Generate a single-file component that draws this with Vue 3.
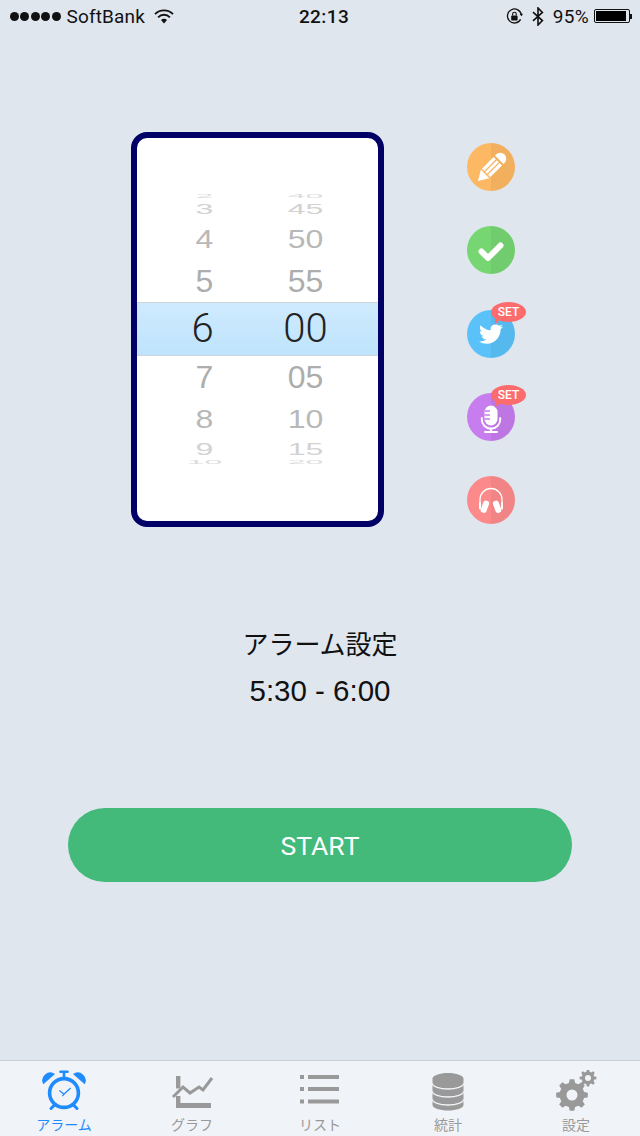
<template>
  <div class="screen">
    <div class="status">
      <div class="status-left">
        <span class="dots"><i v-for="n in 5" :key="n"></i></span>
        <span class="carrier">SoftBank</span>
        <svg class="wifi" width="20" height="15" viewBox="0 0 20 15">
          <path d="M1 5.2a12.6 12.6 0 0 1 18 0" fill="none" stroke="#111" stroke-width="1.9" />
          <path d="M4.1 8.3a8.2 8.2 0 0 1 11.8 0" fill="none" stroke="#111" stroke-width="1.9" />
          <path d="M7 11.1a4.2 4.2 0 0 1 6 0L10 14.4z" fill="#111" />
        </svg>
      </div>
      <div class="clock">22:13</div>
      <div class="status-right">
        <svg width="17" height="17" viewBox="0 0 17 17">
          <path d="M14.6 11.4A7 7 0 1 1 15.4 7" fill="none" stroke="#111" stroke-width="1.3" />
          <path d="M13.6 6.2l2 2 1.4-2.4z" fill="#111" />
          <rect x="5.2" y="7.6" width="6.4" height="5" rx=".8" fill="#111" />
          <path d="M6.6 7.6V6a1.8 1.8 0 0 1 3.6 0v1.6" fill="none" stroke="#111" stroke-width="1.1" />
        </svg>
        <svg class="bt" width="12" height="19" viewBox="0 0 12 19">
          <path d="M1 5.2l9.4 8.4L6 18V1l4.4 4.4L1 13.8" fill="none" stroke="#111" stroke-width="1.6" />
        </svg>
        <span class="percent">95%</span>
        <div class="battery"><div class="battery-fill"></div></div>
        <div class="battery-nub"></div>
      </div>
    </div>

    <div class="stage">
      <div class="card">
        <div class="picker">
          <div
            v-for="row in rows"
            :key="row.hour"
            class="row"
            :class="{ selected: row.selected }"
            :style="{ height: row.height + 'px', color: row.color }"
          >
            <span :style="{ transform: 'scaleY(' + row.scale + ')' }">{{ row.hour }}</span>
            <span :style="{ transform: 'scaleY(' + row.scale + ')' }">{{ row.minute }}</span>
          </div>
        </div>
      </div>

      <div class="side">
        <div v-for="item in sideItems" :key="item.name" class="side-item">
          <svg width="48" height="48" viewBox="0 0 48 48">
            <circle cx="24" cy="24" r="24" :fill="item.color" />
            <path d="M24 0a24 24 0 0 1 0 48z" fill="#000" fill-opacity=".045" />
            <g v-if="item.name === 'pencil'" transform="translate(11 38) rotate(45)" fill="#fff">
              <path d="M0 0L-6-10H6z" />
              <rect x="-6" y="-28" width="3.4" height="16.5" />
              <rect x="-1.4" y="-28" width="2.8" height="16.5" />
              <rect x="2.6" y="-28" width="3.4" height="16.5" />
              <path d="M-6-30v-1.5a6 6 0 0 1 12 0v1.5z" />
            </g>
            <path
              v-else-if="item.name === 'check'"
              d="M14.5 25.5l6.5 6.5L33.5 19.5"
              fill="none"
              stroke="#fff"
              stroke-width="6"
              stroke-linecap="round"
              stroke-linejoin="round"
            />
            <path
              v-else-if="item.name === 'twitter'"
              transform="translate(12 12)"
              fill="#fff"
              d="M23.953 4.57a10 10 0 0 1-2.825.775 4.958 4.958 0 0 0 2.163-2.723c-.951.555-2.005.959-3.127 1.184a4.92 4.92 0 0 0-8.384 4.482C7.69 8.095 4.067 6.13 1.64 3.162a4.822 4.822 0 0 0-.666 2.475c0 1.71.87 3.213 2.188 4.096a4.904 4.904 0 0 1-2.228-.616v.06a4.923 4.923 0 0 0 3.946 4.827 4.996 4.996 0 0 1-2.212.085 4.936 4.936 0 0 0 4.604 3.417 9.867 9.867 0 0 1-6.102 2.105c-.39 0-.779-.023-1.17-.067a13.995 13.995 0 0 0 7.557 2.209c9.053 0 13.998-7.496 13.998-13.985 0-.21 0-.42-.015-.63A9.935 9.935 0 0 0 24 4.59z"
            />
            <g v-else-if="item.name === 'mic'">
              <rect x="17.5" y="12.5" width="13" height="20" rx="6.5" fill="#fff" />
              <path d="M17.5 18h5.5M17.5 22h5.5M17.5 26h5.5" stroke="#c77ded" stroke-width="1.3" />
              <path d="M14.8 25v1.5a9.2 9.2 0 0 0 18.4 0V25" fill="none" stroke="#fff" stroke-width="1.9" stroke-linecap="round" />
              <path d="M24 35.5v3M18 39h12" stroke="#fff" stroke-width="2" stroke-linecap="round" />
            </g>
            <g v-else fill="#fff">
              <path d="M13 30v-6.5a11 11 0 0 1 22 0V30" fill="none" stroke="#fff" stroke-width="1.3" />
              <rect x="14.8" y="24.5" width="6" height="12.5" rx="2.5" transform="rotate(20 17.8 31)" />
              <rect x="27.2" y="24.5" width="6" height="12.5" rx="2.5" transform="rotate(-20 30.2 31)" />
              <rect x="12" y="26" width="2" height="7.5" rx="1" />
              <rect x="34" y="26" width="2" height="7.5" rx="1" />
            </g>
          </svg>
          <div v-if="item.set" class="badge">SET</div>
        </div>
      </div>
    </div>

    <div class="alarm-info">
      <div class="alarm-title">アラーム設定</div>
      <div class="alarm-time">5:30 - 6:00</div>
    </div>

    <button class="start">START</button>

    <nav class="tabs">
      <div class="tab active">
        <svg width="44" height="44" viewBox="0 0 44 44">
          <g fill="none" stroke="#1e8bff">
            <circle cx="22" cy="23" r="14.4" stroke-width="3.6" />
            <path d="M22 8.5V2.5" stroke-width="2.6" />
            <path d="M18.5 1.8h7" stroke-width="2.6" stroke-linecap="round" />
            <path d="M12 35.5l-3 3M32 35.5l3 3" stroke-width="3" stroke-linecap="round" />
            <path d="M22.4 24.4l-5-4M21.6 24.4l7-6.4M20.3 26l1.7-1.6" stroke-width="1.3" />
          </g>
          <path d="M1.3 14.3A8 8 0 0 1 13 4z" fill="#1e8bff" />
          <path d="M42.7 14.3A8 8 0 0 0 31 4z" fill="#1e8bff" />
        </svg>
        <span>アラーム</span>
      </div>
      <div class="tab">
        <svg width="44" height="44" viewBox="0 0 44 44">
          <path d="M6 6h4.4v12.5H6zM6 26h4.4v7H41v5H6z" fill="#999" />
          <path d="M3 27L13 17l7 6 9-6 4 3L42 8" fill="none" stroke="#999" stroke-width="3" />
        </svg>
        <span>グラフ</span>
      </div>
      <div class="tab">
        <svg width="44" height="44" viewBox="0 0 44 44">
          <g fill="#999">
            <rect x="2" y="5" width="4" height="4" />
            <rect x="10" y="5" width="31" height="4" />
            <rect x="2" y="17" width="4" height="4" />
            <rect x="10" y="17" width="31" height="4" />
            <rect x="2" y="29.5" width="4" height="4" />
            <rect x="10" y="29.5" width="31" height="4" />
          </g>
        </svg>
        <span>リスト</span>
      </div>
      <div class="tab">
        <svg width="44" height="44" viewBox="0 0 44 44">
          <path d="M6.5 8.5c0-3 7-5.5 15.5-5.5s15.5 2.5 15.5 5.5v26.5c0 3-7 5.5-15.5 5.5s-15.5-2.5-15.5-5.5z" fill="#999" />
          <g fill="none" stroke="#f0f3f7" stroke-width="1.3">
            <path d="M6.5 13.5c0 3 7 5.5 15.5 5.5s15.5-2.5 15.5-5.5" />
            <path d="M6.5 21.5c0 3 7 5.5 15.5 5.5s15.5-2.5 15.5-5.5" />
            <path d="M6.5 29.5c0 3 7 5.5 15.5 5.5s15.5-2.5 15.5-5.5" />
          </g>
        </svg>
        <span>統計</span>
      </div>
      <div class="tab">
        <svg width="44" height="44" viewBox="0 0 44 44">
          <path :d="bigGear" fill="#999" fill-rule="evenodd" />
          <path :d="smallGear" fill="#999" fill-rule="evenodd" />
        </svg>
        <span>設定</span>
      </div>
    </nav>
  </div>
</template>

<script setup>
const rows = [
  { hour: '2', minute: '40', height: 8, scale: 0.15, color: '#dcdcdc' },
  { hour: '3', minute: '45', height: 18, scale: 0.46, color: '#d2d2d2' },
  { hour: '4', minute: '50', height: 42, scale: 0.82, color: '#b8b8b8' },
  { hour: '5', minute: '55', height: 42, scale: 1, color: '#adadad' },
  { hour: '6', minute: '00', height: 54, scale: 1, color: '#222', selected: true },
  { hour: '7', minute: '05', height: 42, scale: 1, color: '#adadad' },
  { hour: '8', minute: '10', height: 42, scale: 0.82, color: '#b8b8b8' },
  { hour: '9', minute: '15', height: 18, scale: 0.5, color: '#d2d2d2' },
  { hour: '10', minute: '20', height: 8, scale: 0.15, color: '#dcdcdc' }
];

const sideItems = [
  { name: 'pencil', color: '#fdb863' },
  { name: 'check', color: '#76d672' },
  { name: 'twitter', color: '#5ac2f9', set: true },
  { name: 'mic', color: '#c77ded', set: true },
  { name: 'phones', color: '#fc8a8a' }
];

function gear(cx, cy, outer, inner, hole, teeth) {
  let d = '';
  const step = (Math.PI * 2) / teeth;
  for (let i = 0; i < teeth; i++) {
    const a = i * step;
    const pts = [
      [inner, a - step * 0.32],
      [outer, a - step * 0.18],
      [outer, a + step * 0.18],
      [inner, a + step * 0.32]
    ];
    for (const [r, t] of pts) {
      d += (d ? 'L' : 'M') + (cx + r * Math.cos(t)).toFixed(2) + ' ' + (cy + r * Math.sin(t)).toFixed(2);
    }
  }
  d += 'Z';
  d += `M${cx - hole} ${cy}a${hole} ${hole} 0 1 0 ${hole * 2} 0a${hole} ${hole} 0 1 0 ${-hole * 2} 0Z`;
  return d;
}

const bigGear = gear(18, 25, 16, 12.5, 5.5, 8);
const smallGear = gear(34, 8, 8.5, 6.5, 3, 8);
</script>

<style scoped>
.screen {
  width: 640px;
  height: 1136px;
  display: flex;
  flex-direction: column;
  overflow: hidden;
  background: #dfe6ee;
  font-family: "Liberation Sans", "Noto Sans CJK JP", sans-serif;
  color: #111;
}
.status {
  height: 32px;
  display: flex;
  align-items: center;
  font-size: 19px;
  font-family: Roboto, "Liberation Sans", sans-serif;
}
.status-left {
  flex: 1;
  display: flex;
  align-items: center;
  padding-left: 10px;
}
.dots {
  display: flex;
  gap: 1.4px;
}
.dots i {
  width: 9px;
  height: 9px;
  border-radius: 50%;
  background: #111;
}
.carrier {
  margin-left: 6px;
  letter-spacing: 0.15px;
}
.wifi {
  margin-left: 9px;
}
.clock {
  padding-left: 6px;
  font-weight: 500;
  letter-spacing: 0.4px;
}
.status-right {
  flex: 1;
  display: flex;
  align-items: center;
  justify-content: flex-end;
  padding-right: 8px;
}
.bt {
  margin-left: 9px;
}
.percent {
  margin-left: 9px;
  letter-spacing: 0.3px;
}
.battery {
  margin-left: 5px;
  width: 36px;
  height: 14px;
  box-sizing: border-box;
  border: 1px solid #111;
  border-radius: 2px;
  padding: 1px;
}
.battery-fill {
  width: 95%;
  height: 100%;
  background: #000;
}
.battery-nub {
  width: 2px;
  height: 5px;
  background: #111;
}
.stage {
  display: flex;
  margin-top: 100px;
  padding-left: 131px;
}
.card {
  width: 253px;
  height: 395px;
  box-sizing: border-box;
  border: 6px solid #000066;
  border-radius: 16px;
  background: #fff;
  padding-top: 54px;
}
.picker {
  display: flex;
  flex-direction: column;
}
.row {
  display: flex;
  align-items: center;
  padding-left: 17px;
  overflow: hidden;
  font-family: "Liberation Sans", sans-serif;
  font-size: 32px;
  line-height: 1;
}
.row span {
  width: 101px;
  text-align: center;
}
.selected {
  box-sizing: border-box;
  border-top: 1px solid #cfd4d8;
  border-bottom: 1px solid #cfd4d8;
  background: linear-gradient(#cfeafd, #bee4fd);
  font-family: Roboto, "Liberation Sans", sans-serif;
  font-weight: 300;
  font-size: 40px;
}
.selected span:first-child {
  margin-left: -2px;
  margin-right: 2px;
}
.side {
  display: flex;
  flex-direction: column;
  gap: 35.25px;
  margin-left: 83px;
  padding-top: 11px;
}
.side-item {
  position: relative;
  width: 48px;
  height: 48px;
}
.badge {
  position: absolute;
  left: 24px;
  top: -8px;
  width: 35px;
  height: 20px;
  border-radius: 50%;
  background: #fc6c6c;
  color: #fff;
  font-size: 12px;
  font-weight: 500;
  line-height: 20px;
  text-align: center;
  font-family: Roboto, "Liberation Sans", sans-serif;
}
.badge::after {
  content: "";
  position: absolute;
  left: 4px;
  top: 15px;
  border-top: 8px solid #fc6c6c;
  border-right: 7px solid transparent;
}
.alarm-info {
  margin-top: 96px;
  text-align: center;
}
.alarm-title {
  font-size: 26px;
  line-height: 45px;
}
.alarm-time {
  font-size: 29.5px;
  line-height: 45px;
}
.start {
  margin: 95px 68px 0;
  height: 74px;
  border: none;
  border-radius: 37px;
  background: #43b97a;
  color: #fff;
  font-family: Roboto, "Liberation Sans", sans-serif;
  font-size: 26.5px;
}
.tabs {
  margin-top: auto;
  height: 76px;
  box-sizing: border-box;
  border-top: 1px solid #c9ced6;
  background: #f0f3f7;
  display: flex;
}
.tab {
  flex: 1;
  display: flex;
  flex-direction: column;
  align-items: center;
  padding-top: 9px;
  color: #999;
  font-size: 14px;
  line-height: 20px;
  font-family: "Noto Sans CJK JP", sans-serif;
}
.tab svg {
  display: block;
}
.active {
  color: #1e8bff;
}
</style>

<style>
body {
  background: #dfe6ee;
}
</style>
